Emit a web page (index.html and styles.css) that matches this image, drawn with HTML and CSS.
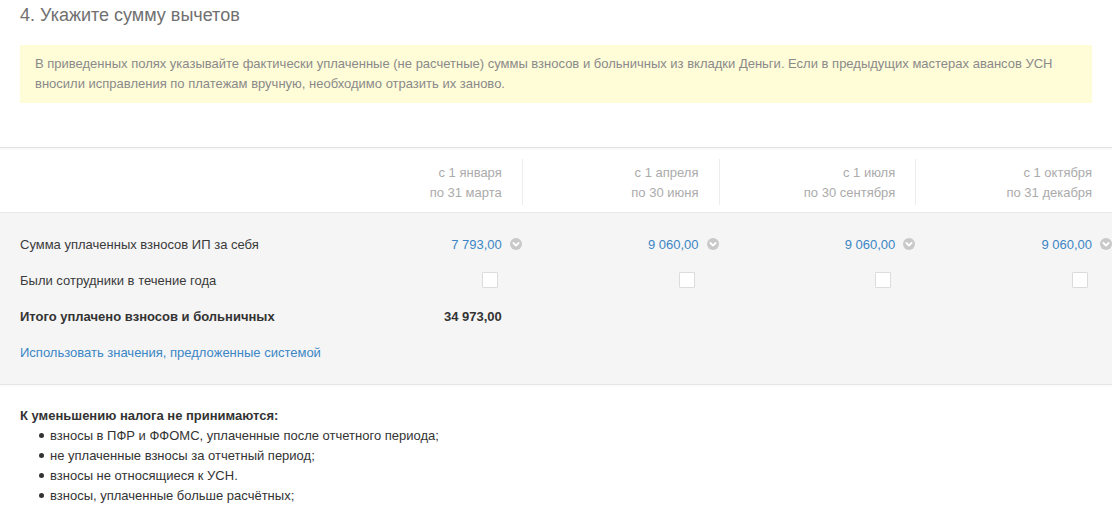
FILE: index.html
```html
<!DOCTYPE html>
<html lang="ru">
<head>
<meta charset="utf-8">
<link rel="stylesheet" href="styles.css">
</head>
<body>
<div class="page">
  <h2 class="title">4. Укажите сумму вычетов</h2>
  <div class="notice">В приведенных полях указывайте фактически уплаченные (не расчетные) суммы взносов и больничных из вкладки Деньги. Если в предыдущих мастерах авансов УСН вносили исправления по платежам вручную, необходимо отразить их заново.</div>

  <div class="table-head">
    <div class="label-cell"></div>
    <div class="period">с 1 января<br>по 31 марта</div>
    <div class="period sep">с 1 апреля<br>по 30 июня</div>
    <div class="period sep">с 1 июля<br>по 30 сентября</div>
    <div class="period sep">с 1 октября<br>по 31 декабря</div>
  </div>

  <div class="table-body">
    <div class="row">
      <div class="label-cell">Сумма уплаченных взносов ИП за себя</div>
      <div class="cell"><span class="value">7 793,00</span><span class="drop"><svg viewBox="0 0 12 12" width="12" height="12"><circle cx="6" cy="6" r="6" fill="#c9c9c9"/><path d="M3.4 5 L6 7.6 L8.6 5" fill="none" stroke="#fff" stroke-width="1.8" stroke-linecap="round" stroke-linejoin="round"/></svg></span></div>
      <div class="cell"><span class="value">9 060,00</span><span class="drop"><svg viewBox="0 0 12 12" width="12" height="12"><circle cx="6" cy="6" r="6" fill="#c9c9c9"/><path d="M3.4 5 L6 7.6 L8.6 5" fill="none" stroke="#fff" stroke-width="1.8" stroke-linecap="round" stroke-linejoin="round"/></svg></span></div>
      <div class="cell"><span class="value">9 060,00</span><span class="drop"><svg viewBox="0 0 12 12" width="12" height="12"><circle cx="6" cy="6" r="6" fill="#c9c9c9"/><path d="M3.4 5 L6 7.6 L8.6 5" fill="none" stroke="#fff" stroke-width="1.8" stroke-linecap="round" stroke-linejoin="round"/></svg></span></div>
      <div class="cell"><span class="value">9 060,00</span><span class="drop"><svg viewBox="0 0 12 12" width="12" height="12"><circle cx="6" cy="6" r="6" fill="#c9c9c9"/><path d="M3.4 5 L6 7.6 L8.6 5" fill="none" stroke="#fff" stroke-width="1.8" stroke-linecap="round" stroke-linejoin="round"/></svg></span></div>
    </div>
    <div class="row">
      <div class="label-cell">Были сотрудники в течение года</div>
      <div class="cell"><span class="check"></span></div>
      <div class="cell"><span class="check"></span></div>
      <div class="cell"><span class="check"></span></div>
      <div class="cell"><span class="check"></span></div>
    </div>
    <div class="row total">
      <div class="label-cell">Итого уплачено взносов и больничных</div>
      <div class="cell">34 973,00</div>
      <div class="cell"></div>
      <div class="cell"></div>
      <div class="cell"></div>
    </div>
    <div class="row">
      <div class="label-cell wide"><a class="link" href="#">Использовать значения, предложенные системой</a></div>
    </div>
  </div>

  <div class="rules">
    <div class="rules-title">К уменьшению налога не принимаются:</div>
    <ul class="rules-list">
      <li>взносы в ПФР и ФФОМС, уплаченные после отчетного периода;</li>
      <li>не уплаченные взносы за отчетный период;</li>
      <li>взносы не относящиеся к УСН.</li>
      <li>взносы, уплаченные больше расчётных;</li>
    </ul>
  </div>
</div>
</body>
</html>
```

FILE: styles.css
```css
html, body {
  margin: 0;
  padding: 0;
  background: #fff;
  overflow: hidden;
}

.page {
  font-family: "Liberation Sans", Arial, sans-serif;
  font-size: 13px;
  color: #333;
  width: 1112px;
}

.title {
  margin: 0;
  padding: 3px 20px 0;
  font-size: 18px;
  font-weight: normal;
  line-height: 24px;
  color: #707070;
}

.notice {
  margin: 18px 20px 0;
  padding: 9px 15px;
  background: #fffcd8;
  color: #8a8a8a;
  line-height: 20px;
}

.table-head,
.row {
  display: grid;
  grid-template-columns: 325px repeat(4, 1fr);
}

.table-head {
  margin-top: 44px;
  border-top: 1px solid #e2e2e2;
  box-shadow: inset 0 2px 0 #f8f8f8;
  padding: 11px 0 7px;
  border-bottom: 1px solid #e8e8e8;
}

.period {
  text-align: right;
  padding: 4px 20px 2px 0;
  line-height: 20px;
  color: #ababab;
}

.period.sep {
  border-left: 1px solid #ececec;
}

.table-body {
  background: #f5f5f5;
  padding: 13px 0 14px;
  border-bottom: 1px solid #e6e6e6;
}

.row {
  height: 36px;
  align-items: center;
}

.label-cell {
  padding-left: 20px;
  color: #3a3a3a;
}

.label-cell.wide {
  grid-column: 1 / -1;
}

.cell {
  display: flex;
  justify-content: flex-end;
  align-items: center;
  padding-right: 20px;
}

.value {
  color: #3b86c5;
}

.drop {
  display: flex;
  width: 12px;
  height: 12px;
  margin-left: 8px;
  margin-right: -20px;
}

.check {
  width: 14px;
  height: 14px;
  background: #fff;
  border: 1px solid #dcdcdc;
  border-radius: 1px;
  margin-right: 4px;
}

.total .label-cell,
.total .cell {
  font-weight: bold;
  color: #333;
}

.link {
  color: #3b86c5;
  text-decoration: none;
}

.rules {
  padding: 19px 20px 0;
  border-top: 2px solid #fbfbfb;
}

.rules-title {
  font-weight: bold;
  line-height: 20px;
  color: #333;
}

.rules-list {
  list-style: none;
  margin: 0;
  padding: 0 0 0 19px;
}

.rules-list li {
  line-height: 20px;
  color: #333;
}

.rules-list li::before {
  content: "";
  display: inline-block;
  width: 5px;
  height: 5px;
  border-radius: 50%;
  background: #333;
  margin-right: 6px;
  vertical-align: 2px;
}
```
